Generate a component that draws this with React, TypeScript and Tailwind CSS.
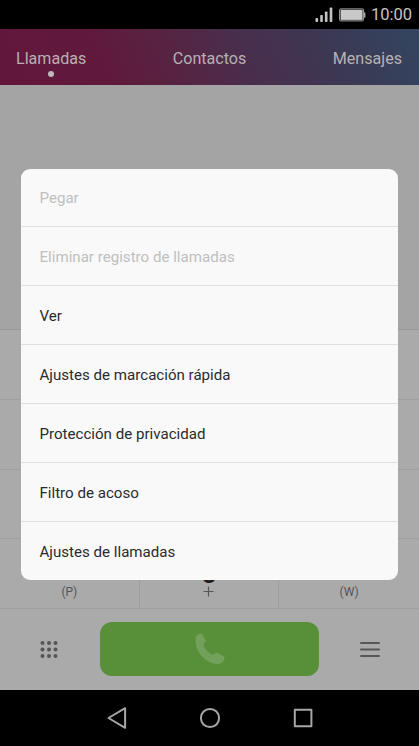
const TABS = [
  { label: 'Llamadas', active: true },
  { label: 'Contactos', active: false },
  { label: 'Mensajes', active: false },
]

const MENU_ITEMS = [
  { label: 'Pegar', disabled: true },
  { label: 'Eliminar registro de llamadas', disabled: true },
  { label: 'Ver', disabled: false },
  { label: 'Ajustes de marcación rápida', disabled: false },
  { label: 'Protección de privacidad', disabled: false },
  { label: 'Filtro de acoso', disabled: false },
  { label: 'Ajustes de llamadas', disabled: false },
]

function StatusBar() {
  return (
    <div className="flex h-[29px] shrink-0 items-center justify-end bg-black pr-[7px] text-[#c4c4c4]">
      <svg className="mr-[6px]" width="18" height="16" viewBox="0 0 18 16" fill="currentColor">
        <rect x="0.5" y="11" width="2.6" height="4" rx="0.8" />
        <rect x="5.2" y="8" width="2.6" height="7" rx="0.8" />
        <rect x="9.9" y="4.5" width="2.6" height="10.5" rx="0.8" />
        <rect x="14.7" y="0.5" width="2.6" height="14.5" rx="0.8" />
      </svg>
      <svg className="mr-[5px]" width="27" height="14" viewBox="0 0 27 14">
        <rect x="0.6" y="0.9" width="24" height="12" rx="1.2" fill="none" stroke="#a8a8a8" strokeWidth="1" />
        <rect x="1.6" y="1.9" width="22" height="10" fill="#c8c8c8" />
        <rect x="25" y="4.5" width="1.4" height="5" fill="#a8a8a8" />
      </svg>
      <span className="pt-0.5 text-[16.500px] leading-none">10:00</span>
    </div>
  )
}

function Tabs() {
  return (
    <div className="flex h-14 shrink-0 justify-between bg-[linear-gradient(65deg,#61173b_0%,#60193c_25%,#562442_42%,#472f4e_60%,#3c3853_78%,#334560_100%)] pr-[17px] pl-4">
      {TABS.map((tab) => (
        <div key={tab.label} className="flex flex-col items-center pt-[18px] text-[#b6b1b5]">
          <span className="text-[16.100px] leading-6">{tab.label}</span>
          {tab.active && <span className="size-1.5 rounded-full bg-[#c0b8bc]" />}
        </div>
      ))}
    </div>
  )
}

function Keypad() {
  return (
    <div className="flex h-[280px] shrink-0 flex-col border-t border-[#989898] bg-[#aaaaaa]">
      <div className="h-[70px] border-b border-[#9e9e9e]" />
      <div className="h-[70px] border-b border-[#9e9e9e]" />
      <div className="h-[69px] border-b border-[#9e9e9e]" />
      <div className="grid h-[70px] grid-cols-3 border-b border-[#9e9e9e] text-[#555555]">
        <div className="flex items-end justify-center border-r border-[#9e9e9e] pb-2 text-xs leading-4">(P)</div>
        <div className="flex flex-col items-center border-r border-[#a0a0a0] pt-[17px]">
          <span className="text-[29px] leading-[34px] font-medium text-[#1c1c1c]">0</span>
          <svg className="-mt-[4px]" width="11" height="11" viewBox="0 0 11 11" stroke="#555555" strokeWidth="1.2">
            <path d="M5.5 0.5V10.5M0.5 5.5H10.5" />
          </svg>
        </div>
        <div className="flex items-end justify-center pb-2 text-xs leading-4">(W)</div>
      </div>
    </div>
  )
}

function CallBar() {
  return (
    <div className="flex h-[81px] shrink-0 items-center bg-[#aaaaaa] pb-px">
      <div className="flex w-[100px] justify-center pr-0.5">
        <svg width="18" height="18" viewBox="0 0 18 18" fill="#565656">
          {[3, 9.5, 16].map((y) =>
            [2.5, 9, 15.5].map((x) => <circle key={`${x}-${y}`} cx={x} cy={y} r="2" />)
          )}
        </svg>
      </div>
      <div className="flex h-[54px] w-[219px] items-center justify-center rounded-xl bg-[#588f39]">
        <svg width="30" height="32" viewBox="0 0 30 32" fill="#73a05a">
          <path d="M2.2 1.9C4 .8 6.200 .4 7.300 1.200L10.800 7.500C11.200 9 8.300 10.300 8.600 12C9.500 15.800 13.500 20 17.200 21.400C18.800 22 20.300 19.500 22 19.600L29 23.600C30 24.700 29.400 27.300 28.200 28.700C26.200 31 22 31.500 18.500 30.600C9.500 28 1.500 20 .6 9.500C.4 6 .4 3.300 2.200 1.900Z" />
        </svg>
      </div>
      <div className="flex flex-1 justify-center pl-0.5">
        <svg width="20" height="17" viewBox="0 0 20 17" stroke="#565656" strokeWidth="2" strokeLinecap="round">
          <path d="M1 2H19M1 8.500H19M1 15H19" />
        </svg>
      </div>
    </div>
  )
}

function NavBar() {
  return (
    <div className="flex h-14 shrink-0 items-center justify-center bg-black">
      <svg width="207" height="24" viewBox="0 0 207 24" fill="none" stroke="#a6a6a6" strokeWidth="2" strokeLinejoin="round">
        <path d="M2.500 12L19.100 2.200V21.800Z" />
        <circle cx="104" cy="12" r="9.100" />
        <rect x="188.800" y="3.700" width="16.600" height="16.600" />
      </svg>
    </div>
  )
}

function OptionsMenu() {
  return (
    <div className="absolute top-[168.600px] left-[21px] w-[377px] overflow-hidden rounded-[9px] bg-[#f9f9f9]">
      {MENU_ITEMS.map((item) => (
        <div
          key={item.label}
          className="flex h-[58.840px] items-center border-b border-[#e0e0e0] pt-[2.500px] pl-[18.500px] text-[15.100px] last:border-b-0"
        >
          <span className={item.disabled ? 'text-[#bfbfbf]' : 'text-[#2b2b2b]'}>{item.label}</span>
        </div>
      ))}
    </div>
  )
}

export default function App() {
  return (
    <div className="relative flex h-[746px] w-[419px] flex-col overflow-hidden bg-[#a4a4a4] font-[Roboto,sans-serif]">
      <StatusBar />
      <Tabs />
      <div className="flex-1" />
      <Keypad />
      <CallBar />
      <NavBar />
      <OptionsMenu />
    </div>
  )
}
